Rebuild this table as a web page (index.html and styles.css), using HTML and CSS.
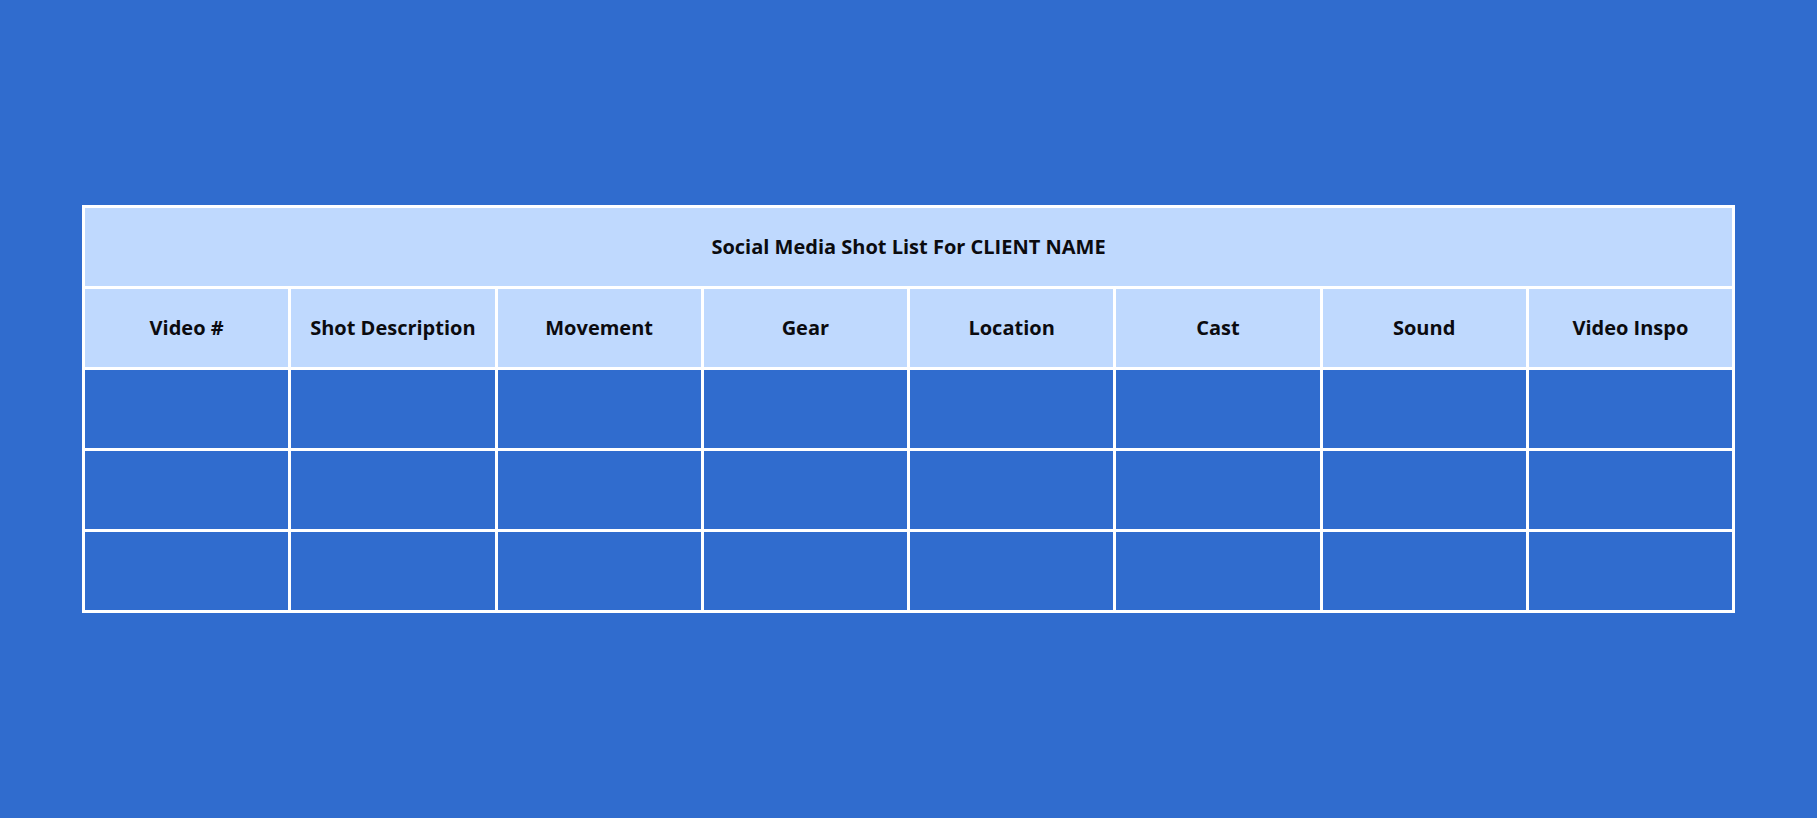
FILE: index.html
```html
<!DOCTYPE html>
<html>
<head>
<meta charset="utf-8">
<link rel="stylesheet" href="styles.css">
</head>
<body>
<div class="page">
  <table class="shots">
    <tr class="title-row"><th colspan="8">Social Media Shot List For CLIENT NAME</th></tr>
    <tr class="head-row">
      <th>Video #</th><th>Shot Description</th><th>Movement</th><th>Gear</th><th>Location</th><th>Cast</th><th>Sound</th><th>Video Inspo</th>
    </tr>
    <tr class="body-row"><td></td><td></td><td></td><td></td><td></td><td></td><td></td><td></td></tr>
    <tr class="body-row"><td></td><td></td><td></td><td></td><td></td><td></td><td></td><td></td></tr>
    <tr class="body-row"><td></td><td></td><td></td><td></td><td></td><td></td><td></td><td></td></tr>
  </table>
</div>
</body>
</html>
```
FILE: styles.css
```css
html, body {
  margin: 0;
  padding: 0;
  background: #306cce;
  height: 100%;
}
.page {
  padding: 205px 0 0 82px;
}
.shots {
  border-collapse: collapse;
  table-layout: fixed;
  width: 1653px;
  font-family: "Open Sans", "Liberation Sans", sans-serif;
  color: #0b0b0f;
}
.shots th, .shots td {
  border: 3px solid #ffffff;
  padding: 0;
  height: 78px;
  text-align: center;
  vertical-align: middle;
}
.title-row th, .head-row th {
  background: #bfd9fe;
  font-weight: 700;
  font-size: 20px;
  height: 76px;
  padding-bottom: 2px;
}
.body-row td {
  background: #306cce;
}
```
